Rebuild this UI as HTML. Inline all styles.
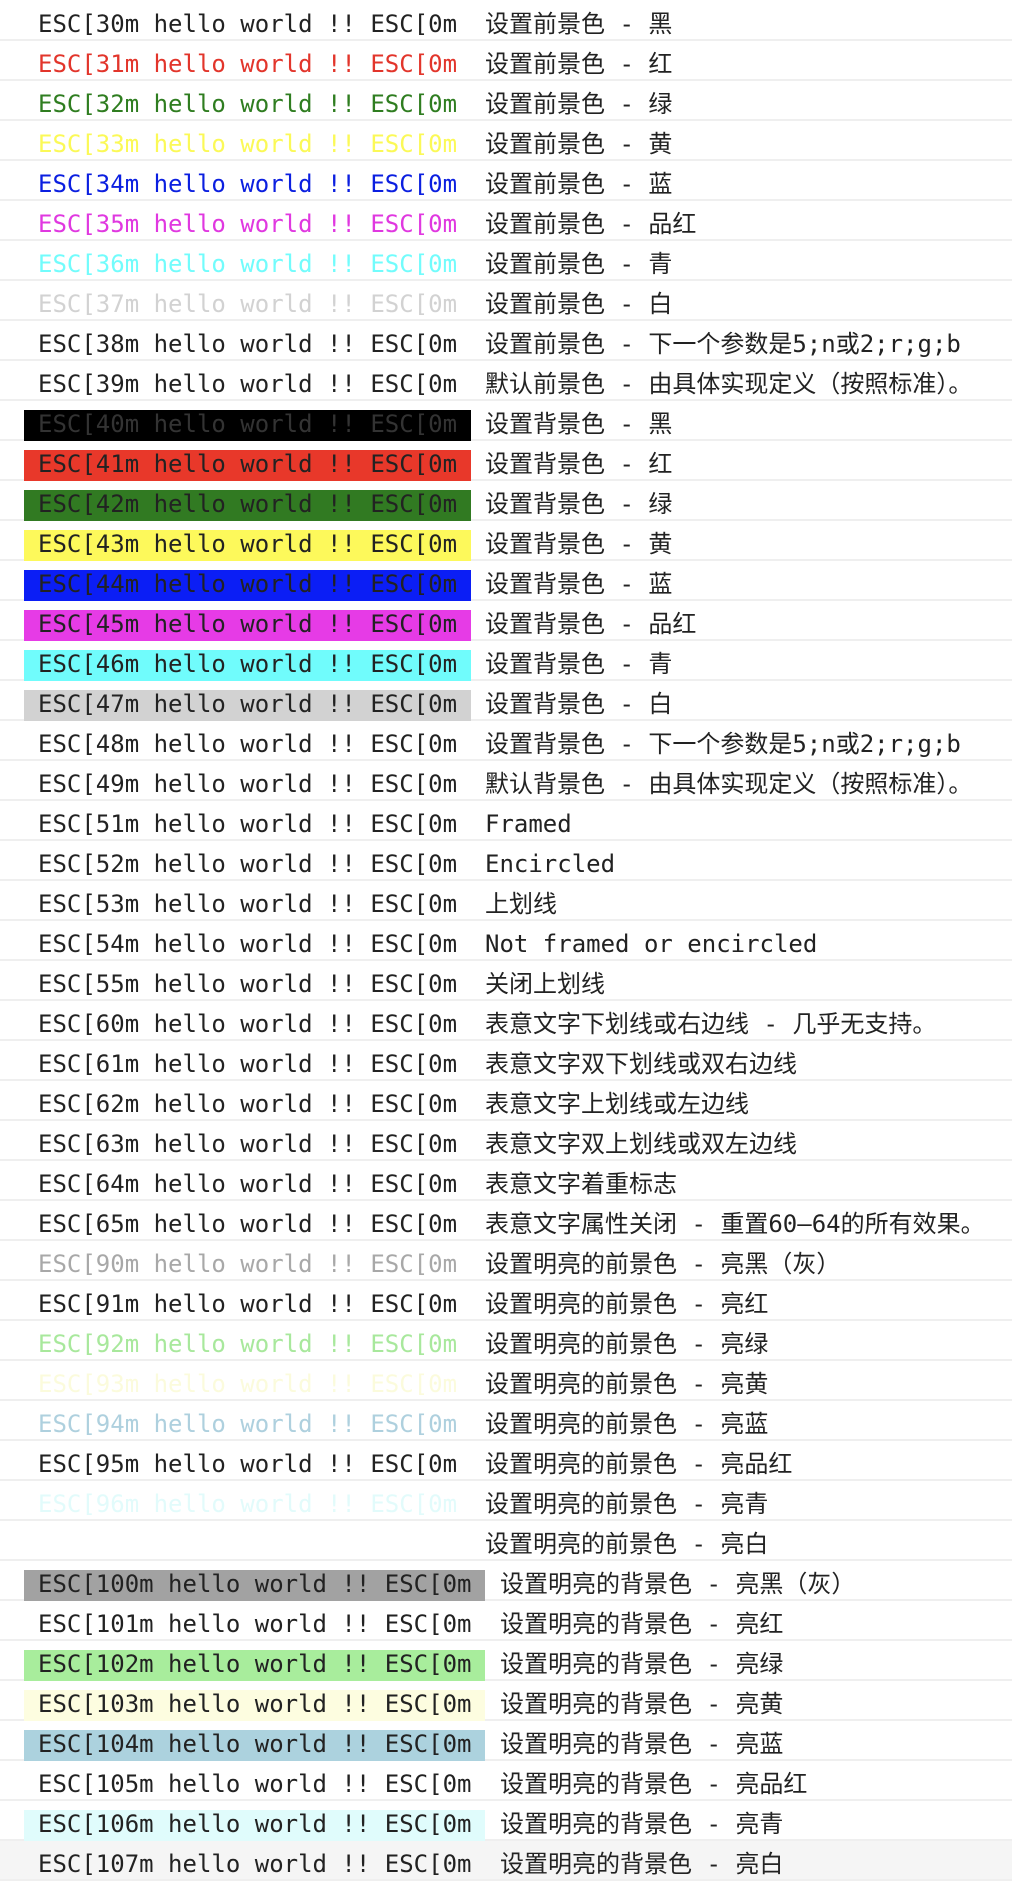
<!DOCTYPE html><html><head><meta charset="utf-8"><style>
body{margin:0;width:1012px;height:1880px;background:#fff;overflow:hidden;font-family:"DejaVu Sans Mono","Noto Sans CJK SC",monospace;font-size:24px;color:#222}
.r{position:absolute;left:0;width:1012px;height:38px;border-bottom:2px solid #efefef}
.c{position:absolute;left:24px;top:9px;height:31px;line-height:29px;padding:0 14px;white-space:pre}
.d{position:absolute;left:485px;top:9px;line-height:29px;white-space:pre}
.w .d{left:500px}
</style></head><body>
<div id="x"></div>
<script>
var R=[
["30","","","设置前景色 - 黑"],["31","#e2352b","","设置前景色 - 红"],["32","#2f7d20","","设置前景色 - 绿"],["33","#fbf957","","设置前景色 - 黄"],["34","#0b1fe0","","设置前景色 - 蓝"],["35","#e038e0","","设置前景色 - 品红"],["36","#72fcfc","","设置前景色 - 青"],["37","#d2d2d2","","设置前景色 - 白"],["38","","","设置前景色 - 下一个参数是5;n或2;r;g;b"],["39","","","默认前景色 - 由具体实现定义（按照标准）。"],
["40","","#000","设置背景色 - 黑"],["41","","#e8382a","设置背景色 - 红"],["42","","#317a22","设置背景色 - 绿"],["43","","#fdf95b","设置背景色 - 黄"],["44","","#0b1ef5","设置背景色 - 蓝"],["45","","#e63be6","设置背景色 - 品红"],["46","","#70fcfc","设置背景色 - 青"],["47","","#d2d2d2","设置背景色 - 白"],["48","","","设置背景色 - 下一个参数是5;n或2;r;g;b"],["49","","","默认背景色 - 由具体实现定义（按照标准）。"],
["51","","","Framed"],["52","","","Encircled"],["53","","","上划线"],["54","","","Not framed or encircled"],["55","","","关闭上划线"],["60","","","表意文字下划线或右边线 - 几乎无支持。"],["61","","","表意文字双下划线或双右边线"],["62","","","表意文字上划线或左边线"],["63","","","表意文字双上划线或双左边线"],["64","","","表意文字着重标志"],["65","","","表意文字属性关闭 - 重置60–64的所有效果。"],
["90","#a8a8a8","","设置明亮的前景色 - 亮黑（灰）"],["91","","","设置明亮的前景色 - 亮红"],["92","#a8e89c","","设置明亮的前景色 - 亮绿"],["93","#fbfbdc","","设置明亮的前景色 - 亮黄"],["94","#aed0de","","设置明亮的前景色 - 亮蓝"],["95","","","设置明亮的前景色 - 亮品红"],["96","#e2fbfb","","设置明亮的前景色 - 亮青"],["97","#fff","","设置明亮的前景色 - 亮白"],
["100","","#a2a2a2","设置明亮的背景色 - 亮黑（灰）"],["101","","","设置明亮的背景色 - 亮红"],["102","","#a8ed9c","设置明亮的背景色 - 亮绿"],["103","","#fdfde0","设置明亮的背景色 - 亮黄"],["104","","#acd2de","设置明亮的背景色 - 亮蓝"],["105","","","设置明亮的背景色 - 亮品红"],["106","","#e0fcfc","设置明亮的背景色 - 亮青"],["107","","","设置明亮的背景色 - 亮白"]];
var h="";R.forEach(function(r,i){var w=r[0].length==3;var st="top:"+(1+40*i)+"px;"+(i==46?"background:#f5f5f5;":"");
var cs=(r[1]?"color:"+r[1]+";":"")+(r[2]?"background:"+r[2]+";":"")+(r[0]=="40"?"color:#333;":"");
h+='<div class="r'+(w?' w':'')+'" style="'+st+'"><div class="c" style="'+cs+'">ESC['+r[0]+'m hello world !! ESC[0m</div><div class="d">'+r[3]+'</div></div>';});
document.getElementById("x").innerHTML=h;
</script></body></html>
